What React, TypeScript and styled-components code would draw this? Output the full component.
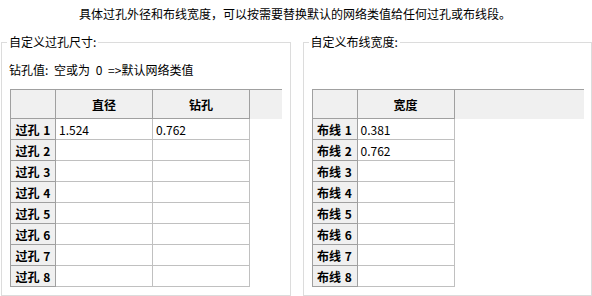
import React from 'react';
import styled, { createGlobalStyle } from 'styled-components';

const GlobalStyle = createGlobalStyle`
  html, body {
    margin: 0;
    padding: 0;
    background: #ffffff;
  }

  body {
    width: 592px;
    height: 296px;
    overflow: hidden;
    font-family: "Noto Sans CJK SC", "Noto Sans", sans-serif;
    font-size: 12px;
    color: #000000;
  }
`;

const Page = styled.div`
  display: flex;
  flex-direction: column;
  width: 592px;
  height: 296px;
`;

const Title = styled.div`
  height: 28px;
  line-height: 28px;
  text-align: center;
  padding-right: 2px;
`;

const Panels = styled.div`
  display: flex;
  gap: 12px;
  margin-top: 6px;
  padding-left: 1px;
`;

const Group = styled.fieldset`
  box-sizing: border-box;
  width: 290px;
  margin: 0;
  padding: 0 0 8px 8px;
  border: 1px solid #dcdcdc;
  min-width: 0;
`;

const Legend = styled.legend`
  margin-left: -3px;
  padding: 0 2px;
  line-height: 16px;
  font-size: 12px;
`;

const Hint = styled.div`
  height: 16px;
  line-height: 16px;
  margin: 12px 0 11px -1px;
  word-spacing: 3px;
`;

const Table = styled.table`
  table-layout: fixed;
  border-collapse: separate;
  border-spacing: 0;
  border-top: 1px solid #a0a0a0;
  border-left: 1px solid #a0a0a0;
  font-size: 12px;
`;

const HeadCell = styled.th<{ $w: number }>`
  box-sizing: border-box;
  width: ${({ $w }) => $w}px;
  height: 29px;
  padding: 0;
  background: #f0f0f0;
  border-right: 1px solid #a0a0a0;
  border-bottom: 1px solid #a0a0a0;
  font-weight: bold;
  text-align: center;
`;

const Filler = styled.th<{ $w: number }>`
  box-sizing: border-box;
  width: ${({ $w }) => $w}px;
  height: 29px;
  padding: 0;
  background: #f0f0f0;
`;

const RowHead = styled.th`
  box-sizing: border-box;
  height: 21px;
  padding: 0;
  background: #f0f0f0;
  border-right: 1px solid #a0a0a0;
  border-bottom: 1px solid #a0a0a0;
  font-weight: bold;
  text-align: center;
  white-space: nowrap;
  word-spacing: 1px;
`;

const Cell = styled.td`
  box-sizing: border-box;
  height: 21px;
  padding: 0 0 0 3px;
  border-right: 1px solid #c0c0c0;
  border-bottom: 1px solid #c0c0c0;
  text-align: left;
  white-space: nowrap;
`;

const Empty = styled.td`
  padding: 0;
`;

type GridProps = {
  columns: string[];
  rowLabel: string;
  values: string[][];
  filler: number;
};

const Grid = ({ columns, rowLabel, values, filler }: GridProps) => {
  return (
    <Table>
      <thead>
        <tr>
          <HeadCell $w={45} />
          {columns.map((c) => (
            <HeadCell key={c} $w={97}>
              {c}
            </HeadCell>
          ))}
          <Filler $w={filler} />
        </tr>
      </thead>
      <tbody>
        {Array.from({ length: 8 }, (_, i) => (
          <tr key={i}>
            <RowHead>
              {rowLabel} {i + 1}
            </RowHead>
            {columns.map((c, j) => (
              <Cell key={c}>{values[i]?.[j] ?? ''}</Cell>
            ))}
            <Empty />
          </tr>
        ))}
      </tbody>
    </Table>
  );
};

const App = () => {
  return (
    <Page>
      <GlobalStyle />
      <Title>具体过孔外径和布线宽度，可以按需要替换默认的网络类值给任何过孔或布线段。</Title>
      <Panels>
        <Group>
          <Legend>自定义过孔尺寸:</Legend>
          <Hint>钻孔值: 空或为 0 =&gt;默认网络类值</Hint>
          <Grid
            columns={['直径', '钻孔']}
            rowLabel="过孔"
            values={[['1.524', '0.762']]}
            filler={32}
          />
        </Group>
        <Group>
          <Legend>自定义布线宽度:</Legend>
          <Hint />
          <Grid
            columns={['宽度']}
            rowLabel="布线"
            values={[['0.381'], ['0.762']]}
            filler={129}
          />
        </Group>
      </Panels>
    </Page>
  );
};

export default App;
